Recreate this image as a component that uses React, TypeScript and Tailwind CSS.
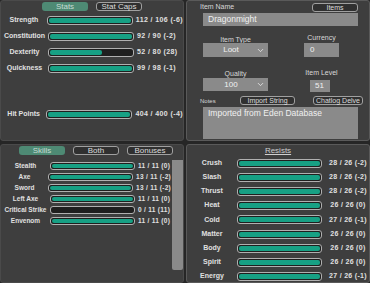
import { ChevronDown } from "lucide-react";

const stats = [
  { label: "Strength", pct: 100, value: "112 / 106 (-6)" },
  { label: "Constitution", pct: 100, value: "92 / 90 (-2)" },
  { label: "Dexterity", pct: 64, value: "52 / 80 (28)" },
  { label: "Quickness", pct: 100, value: "99 / 98 (-1)" },
];

const skills = [
  { label: "Stealth", pct: 100, value: "11 / 11 (0)" },
  { label: "Axe", pct: 100, value: "13 / 11 (-2)" },
  { label: "Sword", pct: 100, value: "13 / 11 (-2)" },
  { label: "Left Axe", pct: 100, value: "11 / 11 (0)" },
  { label: "Critical Strike", pct: 0, value: "0 / 11 (11)" },
  { label: "Envenom", pct: 100, value: "11 / 11 (0)" },
];

const resists = [
  { label: "Crush", value: "28 / 26 (-2)" },
  { label: "Slash", value: "28 / 26 (-2)" },
  { label: "Thrust", value: "28 / 26 (-2)" },
  { label: "Heat", value: "26 / 26 (0)" },
  { label: "Cold", value: "27 / 26 (-1)" },
  { label: "Matter", value: "26 / 26 (0)" },
  { label: "Body", value: "26 / 26 (0)" },
  { label: "Spirit", value: "26 / 26 (0)" },
  { label: "Energy", value: "27 / 26 (-1)" },
];

const Bar = ({ pct, h = "h-[9px]" }: { pct: number; h?: string }) => (
  <div className={`w-full ${h} rounded-[3px] border border-[#b0b0b0] bg-[#1f1f1f] p-px`}>
    <div className="h-full rounded-[2px] bg-[#17a084]" style={{ width: `${pct}%` }} />
  </div>
);

const Tab = ({ text, active }: { text: string; active?: boolean }) => (
  <div
    className={
      active
        ? "w-[46px] h-[9px] rounded-[3px] bg-[#4e8a74] text-[#c6dbd3] text-[8px] leading-[9px] text-center"
        : "w-[46px] h-[9px] rounded-[3px] border border-[#a0a0a0] bg-[#303030] text-[#dcdcdc] text-[8px] leading-[7px] text-center"
    }
  >
    {text}
  </div>
);

const SmallBtn = ({ text, w }: { text: string; w: string }) => (
  <div className={`${w} h-[9px] rounded-[3px] border border-[#a0a0a0] bg-[#303030] text-[#dcdcdc] text-[7px] leading-[7px] text-center whitespace-nowrap`}>
    {text}
  </div>
);

export default function App() {
  return (
    <div className="w-[370px] h-[283px] bg-[#262626] grid grid-cols-[184px_184px] grid-rows-[141px_139px] gap-x-[2px] gap-y-[3px] overflow-hidden font-['Liberation_Sans',Arial,sans-serif] text-[#e0e0e0]">
      {/* Stats */}
      <div className="bg-[#3e3e3e] rounded-[3px] border border-[#4a4a4a] flex flex-col">
        <div className="flex justify-center gap-[8px] pt-[1px]">
          <Tab text="Stats" active />
          <Tab text="Stat Caps" />
        </div>
        <div className="flex flex-col mt-[1px]">
          {stats.map((s) => (
            <div key={s.label} className="flex items-center h-[16px]">
              <div className="w-[47px] text-center text-[7px] font-bold whitespace-nowrap">{s.label}</div>
              <div className="w-[86px] shrink-0"><Bar pct={s.pct} /></div>
              <div className="ml-[3px] text-[7px] font-bold tracking-[0.4px] whitespace-nowrap">{s.value}</div>
            </div>
          ))}
        </div>
        <div className="flex items-center h-[16px] mt-[30px]">
          <div className="w-[47px] text-center text-[7px] font-bold whitespace-nowrap">Hit Points</div>
          <div className="w-[86px] shrink-0"><Bar pct={100} /></div>
          <div className="ml-[3px] text-[7px] font-bold tracking-[0.4px] whitespace-nowrap">404 / 400 (-4)</div>
        </div>
      </div>

      {/* Item */}
      <div className="bg-[#3e3e3e] rounded-[3px] border border-[#5a5a5a] flex flex-col pl-[13px] text-[7px] text-[#d8d8d8]">
        <div className="flex items-center h-[12px]">
          <span className="w-[112px]">Item Name</span>
          <SmallBtn text="Items" w="w-[46px]" />
        </div>
        <div className="ml-[3px] w-[155px] h-[13px] bg-[#8a8a8a] text-[#f0f0f0] text-[8.5px] leading-[13px] pl-[5px]">Dragonmight</div>
        <div className="flex mt-[7px] ml-[3px]">
          <div className="flex flex-col items-center w-[65px]">
            <span className="mt-[3px] leading-[8px]">Item Type</span>
            <div className="mt-[-1px] w-[65px] h-[14px] bg-[#8a8a8a] flex items-center justify-center text-[8px] text-[#f2f2f2] relative">
              <span className="ml-[-9px]">Loot</span>
              <ChevronDown size={9} className="absolute right-[3px]" strokeWidth={2} />
            </div>
          </div>
          <div className="flex flex-col items-center ml-[36px] w-[35px]">
            <span className="mt-[1px] leading-[8px] whitespace-nowrap">Currency</span>
            <div className="mt-[1px] w-[35px] h-[14px] bg-[#8a8a8a] text-[8px] text-[#f2f2f2] leading-[14px] pl-[6px]">0</div>
          </div>
        </div>
        <div className="flex mt-[10px] ml-[3px]">
          <div className="flex flex-col items-center w-[65px]">
            <span className="mt-[3px] leading-[8px]">Quality</span>
            <div className="w-[65px] h-[13px] bg-[#8a8a8a] flex items-center justify-center text-[8px] text-[#f2f2f2] relative">
              <span className="ml-[-9px]">100</span>
              <ChevronDown size={9} className="absolute right-[3px]" strokeWidth={2} />
            </div>
          </div>
          <div className="flex flex-col items-center ml-[36px] w-[35px]">
            <span className="mt-[2px] leading-[8px] whitespace-nowrap">Item Level</span>
            <div className="mt-[3px] ml-[-4px] w-[20px] h-[12px] bg-[#8a8a8a] text-[8px] text-[#f2f2f2] leading-[12px] text-center">51</div>
          </div>
        </div>
        <div className="flex items-end mt-[4px] h-[9px]">
          <span className="text-[6px] leading-[6px] w-[40px] mb-[1px]">Notes</span>
          <SmallBtn text="Import String" w="w-[55px]" />
          <div className="ml-[18px]"><SmallBtn text="Chatlog Delve" w="w-[50px]" /></div>
        </div>
        <div className="mt-[2px] ml-[3px] w-[155px] h-[32px] bg-[#8a8a8a] text-[#f0f0f0] text-[8.5px] leading-[10px] pl-[5px] pt-px">Imported from Eden Database</div>
      </div>

      {/* Skills */}
      <div className="bg-[#3e3e3e] rounded-[3px] border border-[#4a4a4a] flex flex-col">
        <div className="flex gap-[8px] pl-[18px] pt-[1px]">
          <Tab text="Skills" active />
          <Tab text="Both" />
          <Tab text="Bonuses" />
        </div>
        <div className="flex mt-[5px]">
          <div className="w-[171px] overflow-hidden flex flex-col">
            {skills.map((s) => (
              <div key={s.label} className="flex items-center h-[11px]">
                <div className="w-[49px] text-center text-[6.5px] font-bold whitespace-nowrap">{s.label}</div>
                <div className="w-[85px] shrink-0"><Bar pct={s.pct} h="h-[8px]" /></div>
                <div className="ml-[3px] text-[6.5px] font-bold tracking-[0.3px] whitespace-nowrap">{s.value}</div>
              </div>
            ))}
          </div>
          <div className="w-[11px] h-[110px] ml-[1px] rounded-b-[2px] bg-[#8a8a8a]" />
        </div>
      </div>

      {/* Resists */}
      <div className="bg-[#3e3e3e] rounded-[3px] border border-[#5a5a5a] flex flex-col">
        <div className="text-center text-[8px] text-[#cfcfcf] underline leading-[9px] mt-[1px]">Resists</div>
        <div className="flex flex-col mt-[1px]">
          {resists.map((r) => (
            <div key={r.label} className="flex items-center h-[14.2px]">
              <div className="w-[51px] text-center text-[7px] font-bold">{r.label}</div>
              <div className="w-[85px] shrink-0"><Bar pct={100} /></div>
              <div className="ml-[5px] w-[43px] text-center text-[7px] font-bold tracking-[0.3px] whitespace-nowrap">{r.value}</div>
            </div>
          ))}
        </div>
      </div>
    </div>
  );
}
